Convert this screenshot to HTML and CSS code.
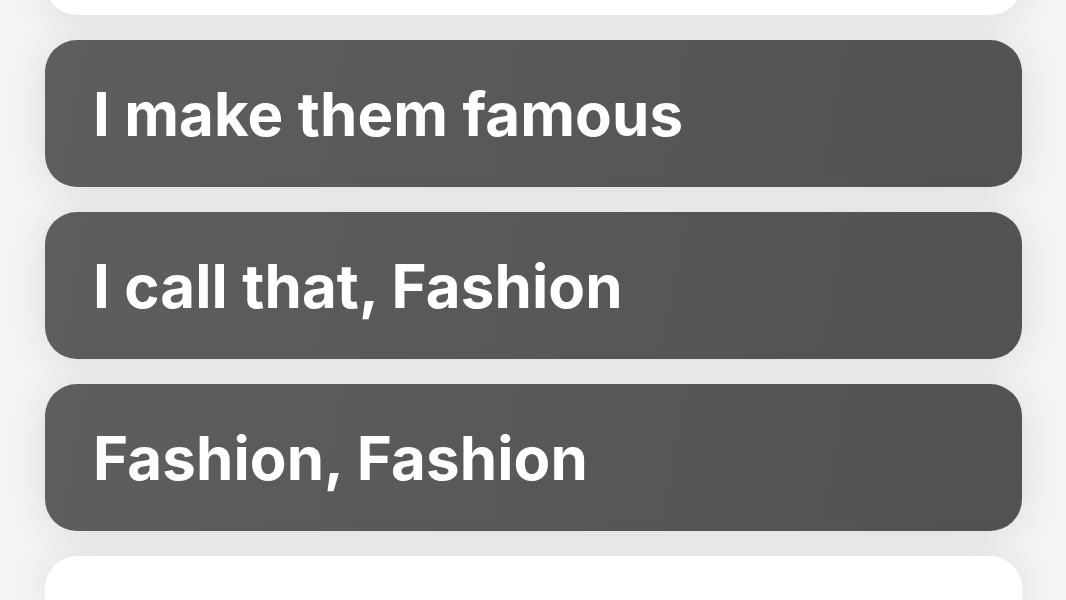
FILE: index.html
```html
<!DOCTYPE html>
<html lang="en">
<head>
<meta charset="utf-8">
<title>Options</title>
<link rel="stylesheet" href="styles.css">
</head>
<body>
<main class="list">
  <div class="card card-light card-top"></div>
  <div class="card card-dark"><span class="label">I make them famous</span></div>
  <div class="card card-dark"><span class="label">I call that, Fashion</span></div>
  <div class="card card-dark"><span class="label">Fashion, Fashion</span></div>
  <div class="card card-light card-bottom"></div>
</main>
</body>
</html>
```
FILE: styles.css
```css
html, body {
  margin: 0;
  padding: 0;
  height: 100%;
  overflow: hidden;
}
body {
  background: #f4f4f4;
  font-family: Inter, "Noto Sans", sans-serif;
}
.list {
  display: flex;
  flex-direction: column;
  gap: 25px;
  padding: 0 44px 0 45px;
  margin-top: -85px;
}
.card {
  border-radius: 32px;
  box-shadow: 0 2px 40px rgba(0, 0, 0, 0.10);
}
.card-light {
  background: #ffffff;
}
.card-top {
  height: 100px;
}
.card-bottom {
  height: 44px;
  border-radius: 32px 32px 0 0;
}
.card-dark {
  height: 147px;
  background: linear-gradient(100deg, #5e5e5e 0%, #575757 60%, #525252 100%);
  display: flex;
  align-items: center;
  padding: 0 48px;
}
.label {
  color: #ffffff;
  font-weight: 700;
  font-size: 60px;
  letter-spacing: 0.1px;
  line-height: 1;
}
```
